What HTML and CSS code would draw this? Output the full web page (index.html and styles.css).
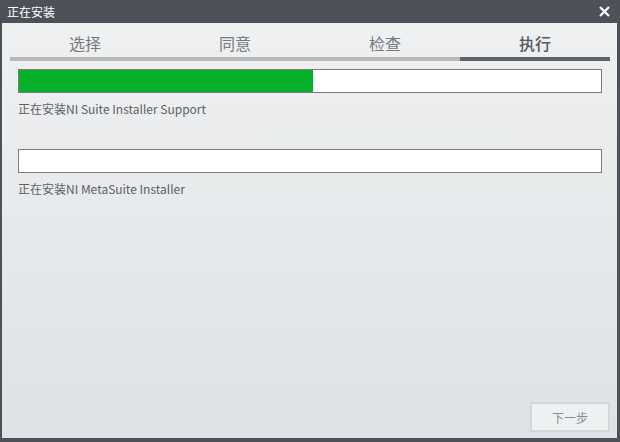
FILE: index.html
```html
<!DOCTYPE html>
<html lang="zh-CN">
  <head>
    <meta charset="UTF-8" />
    <meta name="viewport" content="width=device-width, initial-scale=1.0" />
    <title>正在安装</title>
    <link rel="stylesheet" href="styles.css">
  </head>
  <body>
    <div class="window">
      <div class="title-bar">
        <span class="title">正在安装</span>
        <svg class="close" width="11" height="11" viewBox="0 0 11 11">
          <path d="M1 1 L10 10 M10 1 L1 10" stroke="#fff" stroke-width="2.2" />
        </svg>
      </div>
      <div class="content">
        <div class="tabs">
          <div class="tab">选择</div>
          <div class="tab">同意</div>
          <div class="tab">检查</div>
          <div class="tab active">执行</div>
        </div>
        <div class="tasks">
          <div class="task">
            <div class="bar"><div class="fill" style="width: 50.5%"></div></div>
            <div class="label">正在安装NI Suite Installer Support</div>
          </div>
          <div class="task">
            <div class="bar"><div class="fill" style="width: 0%"></div></div>
            <div class="label">正在安装NI MetaSuite Installer</div>
          </div>
        </div>
        <div class="footer">
          <button class="next-btn" disabled>下一步</button>
        </div>
      </div>
    </div>
  </body>
</html>
```

FILE: styles.css
```css
body {
  margin: 0;
  padding: 0;
  font-family: "Noto Sans CJK SC", "Noto Sans", sans-serif;
}
.window {
  width: 620px;
  height: 442px;
  background-color: #4d5259;
  display: flex;
  flex-direction: column;
}
.title-bar {
  height: 23px;
  display: flex;
  align-items: center;
  justify-content: space-between;
  padding: 0 10px 0 7px;
  flex-shrink: 0;
}
.title {
  color: #fff;
  font-size: 12px;
  line-height: 14px;
  padding-top: 1px;
}
.close {
  display: block;
}
.content {
  flex: 1;
  margin: 0 3px 4px 2px;
  background: linear-gradient(#eef0f1, #dfe2e5);
  display: flex;
  flex-direction: column;
}
.tabs {
  display: grid;
  grid-template-columns: repeat(4, 1fr);
  margin: 0 7px 0 8px;
}
.tab {
  text-align: center;
  font-size: 16px;
  line-height: 22px;
  padding: 9px 0 3px;
  color: #767b80;
  border-bottom: 4px solid #b8b8b8;
}
.tab.active {
  color: #55595e;
  font-weight: 500;
  border-bottom-color: #5e636a;
}
.tasks {
  padding: 0 15px 0 16px;
}
.task {
  margin-top: 8px;
}
.task + .task {
  margin-top: 32px;
}
.bar {
  height: 22px;
  border: 1px solid #787c80;
  background-color: #fff;
}
.fill {
  height: 100%;
  background-color: #06b02b;
}
.label {
  margin-top: 8px;
  font-size: 12px;
  line-height: 16px;
  color: #5d6166;
}
.footer {
  margin-top: auto;
  display: flex;
  justify-content: flex-end;
  padding: 0 7px 6px 0;
}
.next-btn {
  width: 80px;
  height: 30px;
  border: 2px solid #d4d8d9;
  background-color: #eef0f1;
  color: #8a8d90;
  font-family: inherit;
  font-size: 12px;
  padding: 0;
}
```
